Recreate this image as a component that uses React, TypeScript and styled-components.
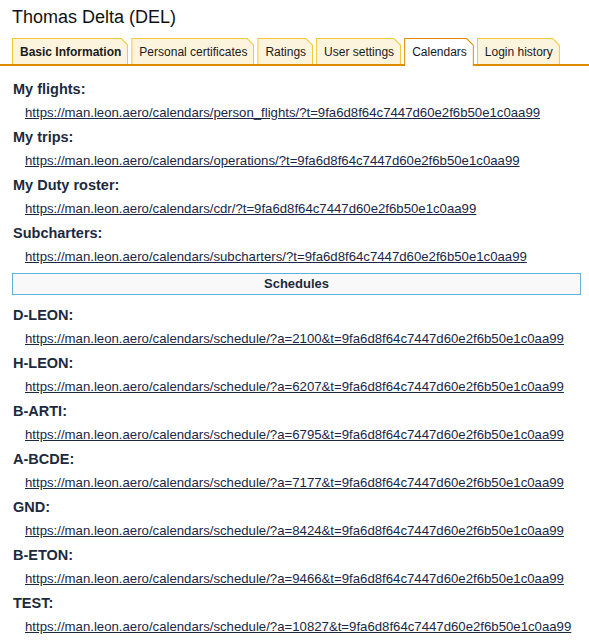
import React from "react";
import styled, { createGlobalStyle } from "styled-components";

const GlobalStyle = createGlobalStyle`
  html, body { margin: 0; padding: 0; background: #ffffff; }
  body { font-family: "Liberation Sans", Arial, sans-serif; }
`;

const Page = styled.div`
  width: 589px;
  padding-top: 7px;
`;

const Title = styled.h1`
  margin: 0 0 10px 12px;
  font-size: 18px;
  line-height: 21px;
  font-weight: normal;
  color: #111111;
`;

const TabBar = styled.div`
  display: flex;
  align-items: flex-end;
  gap: 3px;
  padding: 0 12px;
  border-bottom: 2px solid #e08a00;
`;

const Tab = styled.div<{ $active?: boolean }>`
  position: relative;
  padding: 1px 1px 0 1px;
  margin-bottom: ${(p) => (p.$active ? "-2px" : "0")};
  background: ${(p) => (p.$active ? "#e08a00" : "#f5c83a")};
  clip-path: polygon(0 0, calc(100% - 7px) 0, 100% 7px, 100% 100%, 0 100%);
`;

const TabInner = styled.div<{ $active?: boolean; $bold?: boolean }>`
  padding: 6px 6px ${(p) => (p.$active ? "7px" : "5px")} 7px;
  font-size: 12px;
  line-height: 14px;
  font-weight: ${(p) => (p.$bold ? "bold" : "normal")};
  color: #1a1a1a;
  white-space: nowrap;
  background: ${(p) => (p.$active ? "#ffffff" : "#fdf4dd")};
  clip-path: polygon(0 0, calc(100% - 6.6px) 0, 100% 6.6px, 100% 100%, 0 100%);
`;

const Content = styled.div`
  padding: 11px 8px 0 12px;
`;

const Section = styled.div`
  display: flex;
  flex-direction: column;
`;

const Heading = styled.div`
  padding-left: 1px;
  font-size: 14.5px;
  line-height: 24px;
  font-weight: bold;
  color: #1c2a3e;
`;

const Link = styled.a`
  display: block;
  margin-left: 13px;
  font-size: 13.2px;
  line-height: 24px;
  color: #1a2745;
  text-decoration: underline;
  white-space: nowrap;
`;

const Divider = styled.div`
  margin: 4px 0 8px 0;
  height: 20px;
  line-height: 20px;
  border: 1px solid #62b2e0;
  background: #f9f9f9;
  text-align: center;
  font-size: 13px;
  font-weight: bold;
  color: #1c2a3e;
`;

const T = "9fa6d8f64c7447d60e2f6b50e1c0aa99";
const BASE = "https://man.leon.aero/calendars/";

const tabs = [
  { label: "Basic Information", bold: true },
  { label: "Personal certificates" },
  { label: "Ratings" },
  { label: "User settings" },
  { label: "Calendars", active: true },
  { label: "Login history" },
];

const personal = [
  { title: "My flights:", url: `${BASE}person_flights/?t=${T}` },
  { title: "My trips:", url: `${BASE}operations/?t=${T}` },
  { title: "My Duty roster:", url: `${BASE}cdr/?t=${T}` },
  { title: "Subcharters:", url: `${BASE}subcharters/?t=${T}` },
];

const schedules = [
  { title: "D-LEON:", a: 2100 },
  { title: "H-LEON:", a: 6207 },
  { title: "B-ARTI:", a: 6795 },
  { title: "A-BCDE:", a: 7177 },
  { title: "GND:", a: 8424 },
  { title: "B-ETON:", a: 9466 },
  { title: "TEST:", a: 10827 },
];

export default function App() {
  return (
    <>
      <GlobalStyle />
      <Page>
        <Title>Thomas Delta (DEL)</Title>
        <TabBar>
          {tabs.map((t) => (
            <Tab key={t.label} $active={t.active}>
              <TabInner $active={t.active} $bold={t.bold}>
                {t.label}
              </TabInner>
            </Tab>
          ))}
        </TabBar>
        <Content>
          {personal.map((s) => (
            <Section key={s.title}>
              <Heading>{s.title}</Heading>
              <Link href={s.url}>{s.url}</Link>
            </Section>
          ))}
          <Divider>Schedules</Divider>
          {schedules.map((s) => {
            const url = `${BASE}schedule/?a=${s.a}&t=${T}`;
            return (
              <Section key={s.title}>
                <Heading>{s.title}</Heading>
                <Link href={url}>{url}</Link>
              </Section>
            );
          })}
        </Content>
      </Page>
    </>
  );
}
